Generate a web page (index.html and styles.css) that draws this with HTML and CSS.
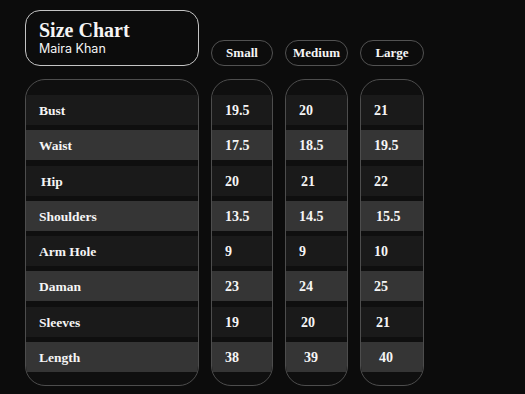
FILE: index.html
```html
<!DOCTYPE html>
<html lang="en">
<head>
<meta charset="utf-8">
<title>Size Chart</title>
<link rel="stylesheet" href="styles.css">
</head>
<body>
<main class="chart">
  <div class="title-box">
    <h1 class="title">Size Chart</h1>
    <div class="subtitle">Maira Khan</div>
  </div>
  <div class="pill">Small</div>
  <div class="pill">Medium</div>
  <div class="pill">Large</div>

  <div class="col labels">
    <div class="cell">Bust</div>
    <div class="cell alt">Waist</div>
    <div class="cell n2">Hip</div>
    <div class="cell alt">Shoulders</div>
    <div class="cell">Arm Hole</div>
    <div class="cell alt">Daman</div>
    <div class="cell">Sleeves</div>
    <div class="cell alt">Length</div>
  </div>
  <div class="col values">
    <div class="cell">19.5</div>
    <div class="cell alt">17.5</div>
    <div class="cell">20</div>
    <div class="cell alt">13.5</div>
    <div class="cell">9</div>
    <div class="cell alt">23</div>
    <div class="cell">19</div>
    <div class="cell alt">38</div>
  </div>
  <div class="col values">
    <div class="cell">20</div>
    <div class="cell alt">18.5</div>
    <div class="cell n2">21</div>
    <div class="cell alt">14.5</div>
    <div class="cell">9</div>
    <div class="cell alt">24</div>
    <div class="cell n2">20</div>
    <div class="cell alt n5">39</div>
  </div>
  <div class="col values">
    <div class="cell">21</div>
    <div class="cell alt">19.5</div>
    <div class="cell">22</div>
    <div class="cell alt n2">15.5</div>
    <div class="cell">10</div>
    <div class="cell alt">25</div>
    <div class="cell n2">21</div>
    <div class="cell alt n5">40</div>
  </div>
</main>
</body>
</html>
```

FILE: styles.css
```css
html, body {
  margin: 0;
  padding: 0;
  background: #0c0c0c;
  color: #f5f5f5;
}

body {
  width: 525px;
  height: 394px;
  overflow: hidden;
}

.chart {
  display: grid;
  grid-template-columns: 174px 62px 63px 64px;
  grid-template-rows: 56px 307px;
  column-gap: 12px;
  row-gap: 13px;
  padding: 10px 0 0 25px;
  font-family: "Liberation Serif", "Times New Roman", serif;
  font-weight: bold;
}

.title-box {
  box-sizing: border-box;
  border: 1.5px solid #c4c4c4;
  border-radius: 15px;
  padding: 8px 0 0 13px;
}

.title {
  margin: 0;
  font-size: 20px;
  line-height: 22px;
  font-weight: bold;
}

.subtitle {
  font-family: "Inter", "Open Sans", sans-serif;
  font-weight: 400;
  font-size: 12.5px;
  line-height: 15px;
}

.pill {
  align-self: end;
  box-sizing: border-box;
  height: 26px;
  border: 1px solid #525252;
  border-radius: 13px;
  display: flex;
  align-items: center;
  justify-content: center;
  font-size: 13px;
  padding-bottom: 1px;
}

.col {
  box-sizing: border-box;
  border: 1px solid #4d4d4d;
  border-radius: 20px;
  background: #0f0f0f;
  overflow: hidden;
  display: flex;
  flex-direction: column;
  gap: 5.3px;
  padding: 15px 0 13px;
}

.cell {
  height: 30px;
  flex: none;
  display: flex;
  align-items: center;
  background: #1a1a1a;
  padding-left: 13px;
  padding-top: 2px;
  box-sizing: border-box;
}

.cell.alt {
  background: #353535;
}

.labels .cell {
  font-size: 13.5px;
}

.values .cell {
  font-size: 14px;
}

.cell.n2 {
  padding-left: 15px;
}

.cell.n5 {
  padding-left: 18px;
}
```
